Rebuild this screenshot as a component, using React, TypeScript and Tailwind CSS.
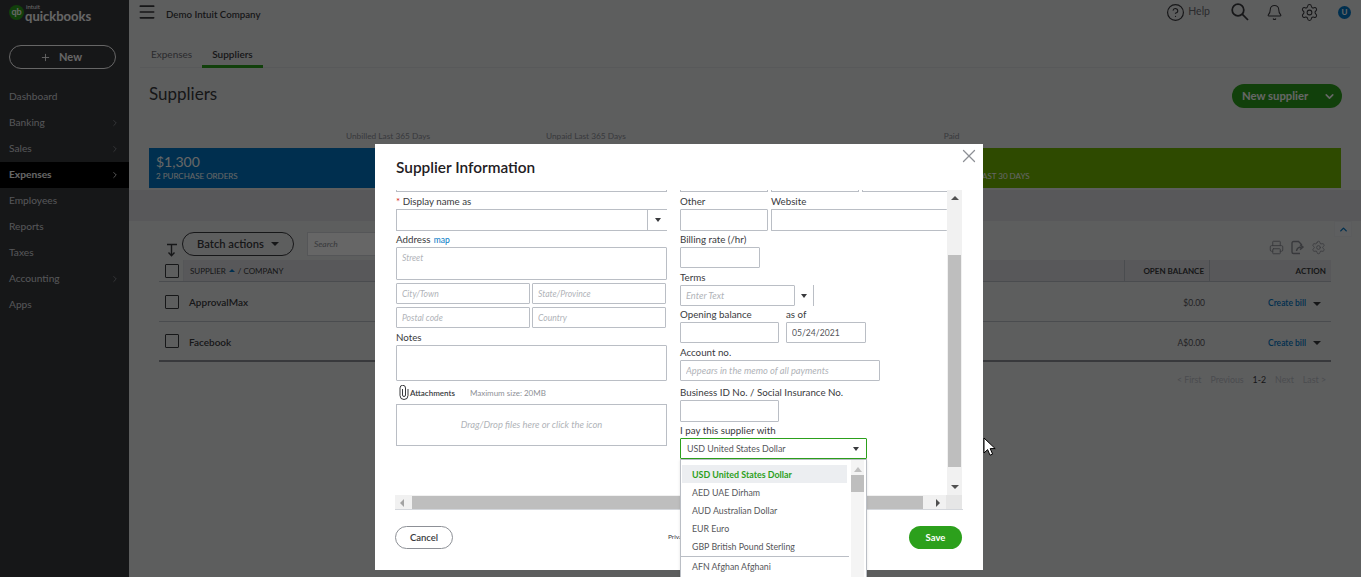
import React from 'react';
import { Bell, ChevronDown, ChevronRight, ChevronUp, CircleHelp, Menu, Plus, Printer, Settings, X } from 'lucide-react';

const navItems = [
  { label: 'Dashboard' },
  { label: 'Banking', arrow: true },
  { label: 'Sales', arrow: true },
  { label: 'Expenses', arrow: true, active: true },
  { label: 'Employees' },
  { label: 'Reports' },
  { label: 'Taxes' },
  { label: 'Accounting', arrow: true },
  { label: 'Apps' },
];

const currencies = ['AED UAE Dirham', 'AUD Australian Dollar', 'EUR Euro', 'GBP British Pound Sterling'];

const Caret = ({ small }: { small?: boolean }) => (
  <span
    className={
      small
        ? 'inline-block w-0 h-0 border-x-[3px] border-x-transparent border-t-[4px] border-t-[#393a3d]'
        : 'inline-block w-0 h-0 border-x-[4px] border-x-transparent border-t-[4px] border-t-[#393a3d]'
    }
  />
);

const Label = ({ children, className = '' }: { children: React.ReactNode; className?: string }) => (
  <div className={`h-[16px] leading-[16px] text-[9.75px] text-[#393a3d] whitespace-nowrap ${className}`}>{children}</div>
);

const Field = ({
  className = '',
  placeholder,
  value,
  large,
}: {
  className?: string;
  placeholder?: string;
  value?: string;
  large?: boolean;
}) => (
  <input
    readOnly
    value={value}
    placeholder={placeholder}
    className={`block border border-[#babec5] rounded-[1px] bg-white px-[5px] ${large ? 'text-[9.3px]' : 'text-[8.6px]'} text-[#55565a] placeholder:italic placeholder:text-[#b0b3b8] outline-none ${className}`}
  />
);

const Sidebar = () => (
  <aside className="w-[129px] shrink-0 bg-[#393a3d] text-[#d4d7dc]">
    <div className="h-[33px] pl-[9px] pt-[5px] flex items-start">
      <div className="w-[15px] h-[15px] rounded-full bg-[#2ca01c] text-white text-[9px] font-bold leading-[14px] text-center">qb</div>
      <div className="ml-[1px] -mt-[1px] text-white leading-none">
        <div className="text-[6px] pl-[1px] h-[6px]">intuit</div>
        <div className="text-[13px] font-bold">quickbooks</div>
      </div>
    </div>
    <div className="ml-[9px] mr-[13px] mt-[12px] h-[24px] pr-[3px] rounded-full border border-white flex items-center justify-center gap-[8px] text-white text-[11px] font-bold">
      <Plus size={11} />
      New
    </div>
    <nav className="mt-[15px]">
      {navItems.map((item) => (
        <div
          key={item.label}
          className={`h-[26px] pl-[9px] pr-[9px] flex items-center justify-between text-[10.2px] ${item.active ? 'bg-black text-white font-bold' : ''}`}
        >
          {item.label}
          {item.arrow && <ChevronRight size={10} className={item.active ? 'text-white' : 'text-[#8d9096]'} />}
        </div>
      ))}
    </nav>
  </aside>
);

const TopBar = () => (
  <div className="h-[33px] flex items-center pl-[8px] text-[#393a3d]">
    <Menu size={20} strokeWidth={2} className="-mt-[9px]" />
    <span className="ml-[9px] text-[9.7px] font-semibold -mt-[5px]">Demo Intuit Company</span>
    <div className="ml-auto flex items-center -mt-[9px] pr-[10px]">
      <CircleHelp size={19} strokeWidth={1.5} />
      <span className="ml-[3px] text-[10.5px] text-[#6b6c72]">Help</span>
      <svg width="18" height="18" viewBox="0 0 18 18" fill="none" stroke="currentColor" strokeWidth="1.75" className="ml-[21px]">
        <circle cx="7" cy="7" r="5.8" />
        <path d="M11.2 11.2 17 17" />
      </svg>
      <Bell size={17} strokeWidth={1.5} className="ml-[17px]" />
      <Settings size={19} strokeWidth={1.3} className="ml-[17px]" />
      <div className="ml-[19px] w-[13px] h-[13px] rounded-full bg-[#0077c5] text-white text-[8px] font-bold leading-[13px] text-center">U</div>
    </div>
  </div>
);

const Tabs = () => (
  <div className="h-[35px] mx-[11px] flex border-b border-[#dcdee2] text-[10px] text-[#393a3d]">
    <div className="w-[62px] pl-[11px] pt-[14px] text-[#6b6c72]">Expenses</div>
    <div className="w-[61px] text-center pt-[14px] font-semibold border-b-[3px] border-[#2ca01c] h-[35px]">Suppliers</div>
  </div>
);

const MoneyBar = () => (
  <div className="mx-[20px]">
    <div className="flex h-[14px] items-center text-[8.3px] text-[#8d9096]">
      <span className="ml-[197px]">Unbilled Last 365 Days</span>
      <span className="ml-[116px]">Unpaid Last 365 Days</span>
      <span className="ml-[318px]">Paid</span>
    </div>
    <div className="flex h-[40px] mt-[5px] text-white">
      <div className="w-[400px] bg-[#0077c5] pl-[7px] pt-[5px]">
        <div className="text-[14px] leading-[18px]">$1,300</div>
        <div className="text-[8px] leading-[10px]">2 PURCHASE ORDERS</div>
      </div>
      <div className="w-[395px] bg-[#ff8000]" />
      <div className="flex-1 bg-[#73b900] pl-[7px] pt-[23px] text-[8px] leading-[10px]">0 PAID LAST 30 DAYS</div>
    </div>
  </div>
);

const TableRow = ({ name, balance, last }: { name: string; balance: string; last?: boolean }) => (
  <div className={`h-[40px] flex items-center border-b ${last ? 'border-b-2 border-[#8d9096]' : 'border-[#babec5]'}`}>
    <div className="w-[24px] pl-[6px]">
      <div className="w-[14px] h-[14px] border border-[#393a3d] rounded-[1px]" />
    </div>
    <span className="ml-[6px] pt-[2px] text-[10px] font-semibold text-[#393a3d]">{name}</span>
    <span className="ml-auto pt-[4px] text-[8.5px] text-[#55565a]">{balance}</span>
    <span className="w-[126px] pl-[63px] pt-[4px] flex items-center gap-[7px] text-[8.5px] font-semibold text-[#0077c5]">
      Create bill
      <Caret />
    </span>
  </div>
);

const TableCard = () => (
  <div className="flex-1 bg-[#e9eaec] relative px-[30px]">
    <div className="absolute right-[9px] top-0 w-[18px] h-[16px] bg-[#eceef1] border border-[#e3e5e8] flex items-center justify-center">
      <ChevronUp size={11} strokeWidth={3} className="text-[#0077c5]" />
    </div>
    <div className="h-[39px] flex items-end pb-[4px]">
      <svg width="12" height="14" viewBox="0 0 12 14" fill="none" stroke="#393a3d" strokeWidth="1.4" className="ml-[7px] -mb-[1px]">
        <path d="M1 1.5h10M5.5 1.5v11M2.5 9.5l3 3.2 3-3.2" />
      </svg>
      <div className="ml-[4px] w-[112px] h-[24px] rounded-full border border-[#393a3d] flex items-center justify-center gap-[7px] text-[11.2px] font-semibold text-[#393a3d]">
        Batch actions
        <Caret />
      </div>
      <div className="ml-[13px] w-[200px] h-[24px] border border-[#d4d7dc] bg-white pl-[6px] text-[8.5px] italic leading-[22px] text-[#8d9096]">Search</div>
      <div className="ml-auto flex items-center gap-[6px] text-[#8d9096] pr-[5px] pb-[1px]">
        <Printer size={15} strokeWidth={1.5} />
        <svg width="15" height="15" viewBox="0 0 15 15" fill="none" stroke="currentColor" strokeWidth="1.4">
          <path d="M10 13.5H3.5a1.5 1.5 0 0 1-1.5-1.5V3a1.5 1.5 0 0 1 1.5-1.5h5l3 3v1" />
          <path d="M6.5 11c.4-2.6 2-4 5-4M10 4.8 13 7l-3 2.6" />
        </svg>
        <Settings size={15} strokeWidth={1.3} />
      </div>
    </div>
    <div className="h-[22px] flex items-center border-b border-[#babec5] text-[8px] text-[#393a3d]">
      <div className="w-[24px] pl-[6px] h-full flex items-center">
        <div className="w-[14px] h-[14px] border border-[#393a3d] rounded-[1px]" />
      </div>
      <div className="flex-1 flex h-full items-center bg-[#dcdde0] border-l border-[#d4d7dc]">
        <span className="ml-[6px]">SUPPLIER</span>
        <span className="ml-[3px] w-0 h-0 border-x-[3px] border-x-transparent border-b-[3px] border-b-[#0077c5]" />
        <span className="ml-[3px]">/ COMPANY</span>
        <div className="ml-auto w-[86px] h-full border-x border-[#babec5] flex items-center justify-end pr-[5px] font-bold">OPEN BALANCE</div>
        <div className="w-[121px] pr-[5px] text-right font-bold">ACTION</div>
      </div>
    </div>
    <TableRow name="ApprovalMax" balance="$0.00" />
    <TableRow name="Facebook" balance="A$0.00" last />
    <div className="h-[34px] pt-[2px] flex items-center justify-end gap-[9px] pr-[5px] text-[8.8px] text-[#babec5]">
      <span>&lt; First</span>
      <span>Previous</span>
      <span className="text-[#393a3d]">1-2</span>
      <span>Next</span>
      <span>Last &gt;</span>
    </div>
  </div>
);

const CurrencyMenu = () => (
  <div className="absolute left-[305px] top-[315px] w-[187px] h-[120px] bg-white border border-[#babec5] shadow-sm overflow-hidden pt-[5px]">
    <div className="absolute right-[2px] top-0 bottom-0 w-[13px] bg-[#f4f4f4]">
      <div className="w-0 h-0 mx-auto mt-[7px] border-x-[4px] border-x-transparent border-b-[5px] border-b-[#c0c0c0]" />
      <div className="mt-[3px] h-[17px] bg-[#bebebe]" />
    </div>
    <div className="ml-[1px] w-[165px] h-[18px] bg-[#eceef1] pl-[10px] text-[8.9px] font-bold leading-[20px] text-[#2ca01c]">USD United States Dollar</div>
    {currencies.map((c) => (
      <div key={c} className="w-[165px] h-[18px] pl-[11px] text-[8.8px] leading-[20px] text-[#55565a]">{c}</div>
    ))}
    <div className="w-[168px] mt-[1px] h-[20px] border-t border-[#babec5] pl-[11px] text-[8.8px] leading-[20px] text-[#55565a]">AFN Afghan Afghani</div>
  </div>
);

const LeftColumn = () => (
  <div className="w-[271px] shrink-0">
    <div className="h-[2px] border border-t-0 border-[#babec5]" />
    <Label className="mt-px"><span className="text-[#d52b1e]">*</span> Display name as</Label>
    <div className="h-[22px] flex border border-r-0 border-[#babec5]">
      <div className="flex-1 border-r border-[#babec5]" />
      <div className="w-[19px] flex items-center justify-center"><Caret small /></div>
    </div>
    <Label>Address <span className="ml-[1px] text-[#0077c5] text-[8.5px]">map</span></Label>
    <Field className="w-full h-[33px] pb-[12px]" placeholder="Street" />
    <div className="mt-[3px] flex gap-[2px] pr-px">
      <Field className="w-[134px] h-[21px]" placeholder="City/Town" />
      <Field className="w-[134px] h-[21px]" placeholder="State/Province" />
    </div>
    <div className="mt-[3px] flex gap-[2px] pr-px">
      <Field className="w-[134px] h-[21px]" placeholder="Postal code" />
      <Field className="w-[134px] h-[21px]" placeholder="Country" />
    </div>
    <Label className="mt-px">Notes</Label>
    <Field className="w-full h-[36px]" />
    <div className="h-[23px] flex items-center pl-[3px] text-[8px]">
      <svg width="10" height="15" viewBox="0 0 10 15" fill="none" stroke="#393a3d" strokeWidth="1">
        <path d="M3.5 4v6a1.5 1.5 0 0 0 3 0V3A2.75 2.75 0 0 0 1 3v7.5a4 4 0 0 0 8 0V4" />
      </svg>
      <span className="ml-[1px] font-semibold text-[#393a3d]">Attachments</span>
      <span className="ml-[15px] text-[#8d9096]">Maximum size: 20MB</span>
    </div>
    <div className="h-[42px] border border-[#babec5] flex items-center justify-center text-[9.4px] italic text-[#b0b3b8]">
      Drag/Drop files here or click the icon
    </div>
  </div>
);

const RightColumn = () => (
  <div className="ml-[13px] w-[267px] shrink-0">
    <div className="h-[2px] flex gap-[3px]">
      <div className="w-[88px] border border-t-0 border-[#babec5]" />
      <div className="w-[88px] border border-t-0 border-[#babec5]" />
      <div className="flex-1 border border-t-0 border-r-0 border-[#babec5]" />
    </div>
    <Label className="mt-px flex">
      <span className="w-[91px]">Other</span>
      <span>Website</span>
    </Label>
    <div className="flex gap-[3px]">
      <Field className="w-[88px] h-[22px]" />
      <Field className="flex-1 min-w-0 h-[22px] border-r-0" />
    </div>
    <Label>Billing rate (/hr)</Label>
    <Field className="w-[80px] h-[21px]" />
    <Label className="mt-px">Terms</Label>
    <div className="w-[134px] h-[21px] flex border-r border-[#babec5]">
      <Field className="w-[115px] h-[21px]" placeholder="Enter Text" large />
      <div className="flex-1 flex items-center justify-center"><Caret small /></div>
    </div>
    <Label className="flex">
      <span className="w-[106px]">Opening balance</span>
      <span>as of</span>
    </Label>
    <div className="flex gap-[7px]">
      <Field className="w-[99px] h-[21px]" />
      <Field className="w-[80px] h-[21px]" value="05/24/2021" />
    </div>
    <Label className="mt-px">Account no.</Label>
    <Field className="w-[200px] h-[21px]" placeholder="Appears in the memo of all payments" large />
    <Label className="mt-[3px]">Business ID No. / Social Insurance No.</Label>
    <Field className="w-[99px] h-[22px]" />
    <Label>I pay this supplier with</Label>
    <div className="w-[187px] h-[21px] border border-[#2ca01c] rounded-[1px] flex items-center justify-between pl-[6px] pr-[7px] text-[8.9px] text-[#55565a]">
      USD United States Dollar
      <Caret small />
    </div>
  </div>
);

const SupplierModal = () => (
  <div className="absolute left-[375px] top-[144px] w-[608px] h-[426px] bg-white flex flex-col">
    <div className="h-[46px] flex items-start justify-between pl-[21px] pr-[3px] shrink-0">
      <h2 className="mt-[14px] text-[15.4px] leading-[18px] font-semibold text-[#1f2023]">Supplier Information</h2>
      <X size={22} strokeWidth={1.4} className="mt-px text-[#8d9096]" />
    </div>
    <div className="mx-[20px] h-[320px] relative border-b border-[#d4d7dc] overflow-hidden">
      <div className="h-[305px] w-[552px] overflow-hidden flex pl-px">
        <LeftColumn />
        <RightColumn />
      </div>
      {/* scrollbars */}
      <div className="absolute right-[1px] top-0 w-[15px] h-[305px] bg-[#f1f1f1] flex flex-col items-center">
        <div className="mt-[6px] w-0 h-0 border-x-[4px] border-x-transparent border-b-[4px] border-b-[#505050]" />
        <div className="mt-[55px] w-[13px] h-[212px] bg-[#bebebe]" />
        <div className="mt-auto mb-[6px] w-0 h-0 border-x-[4px] border-x-transparent border-t-[4px] border-t-[#505050]" />
      </div>
      <div className="h-[15px] w-[567px] bg-[#f1f1f1] flex items-center">
        <div className="ml-[5px] w-0 h-0 border-y-[4px] border-y-transparent border-r-[4px] border-r-[#a3a3a3]" />
        <div className="ml-[8px] w-[511px] h-[13px] bg-[#bebebe]" />
        <div className="ml-[13px] w-0 h-0 border-y-[4px] border-y-transparent border-l-[4px] border-l-[#505050]" />
        <div className="ml-auto w-[16px] h-full bg-[#e6e6e6]" />
      </div>
    </div>
    <div className="flex-1 flex items-start justify-between pl-[20px] pr-[21px] pt-[16px] relative">
      <div className="w-[58px] h-[23px] rounded-full border border-[#8d9096] text-center text-[9.5px] font-semibold leading-[21px] text-[#393a3d]">Cancel</div>
      <span className="absolute left-[293px] top-[22px] text-[6.5px] text-[#393a3d]">Privacy</span>
      <div className="w-[53px] h-[23px] rounded-full bg-[#2ca01c] text-center text-[9.5px] font-bold leading-[23px] text-white">Save</div>
    </div>
    <CurrencyMenu />
  </div>
);

export default function App() {
  return (
    <div className="relative w-[1361px] h-[577px] overflow-hidden flex bg-[#e9eaec] font-['Lato',sans-serif]">
      <Sidebar />
      <main className="flex-1 flex flex-col min-w-0">
        <TopBar />
        <Tabs />
        <div className="h-[122px] flex flex-col">
          <div className="h-[61px] ml-[20px] mr-[19px] flex items-start justify-between pt-[16px]">
            <h1 className="text-[17px] leading-[20px] text-[#393a3d]">Suppliers</h1>
            <div className="w-[110px] h-[24px] rounded-full bg-[#2ca01c] flex items-center justify-between pl-[10px] pr-[6px] text-[11.3px] font-bold text-white">
              New supplier
              <ChevronDown size={13} strokeWidth={3} />
            </div>
          </div>
          <MoneyBar />
        </div>
        <div className="h-[32px] bg-[#dcdde0] -mb-px" />
        <TableCard />
      </main>
      {/* dimmed backdrop and dialog */}
      <div className="absolute inset-0 bg-black/60" />
      <SupplierModal />
      <svg width="13" height="20" viewBox="0 0 13 20" className="absolute left-[983px] top-[437px]">
        <path d="M1 1v15l3.6-3.4 2.4 5.6 2.6-1.1-2.4-5.5h5z" fill="#fff" stroke="#000" strokeWidth="1" />
      </svg>
    </div>
  );
}
